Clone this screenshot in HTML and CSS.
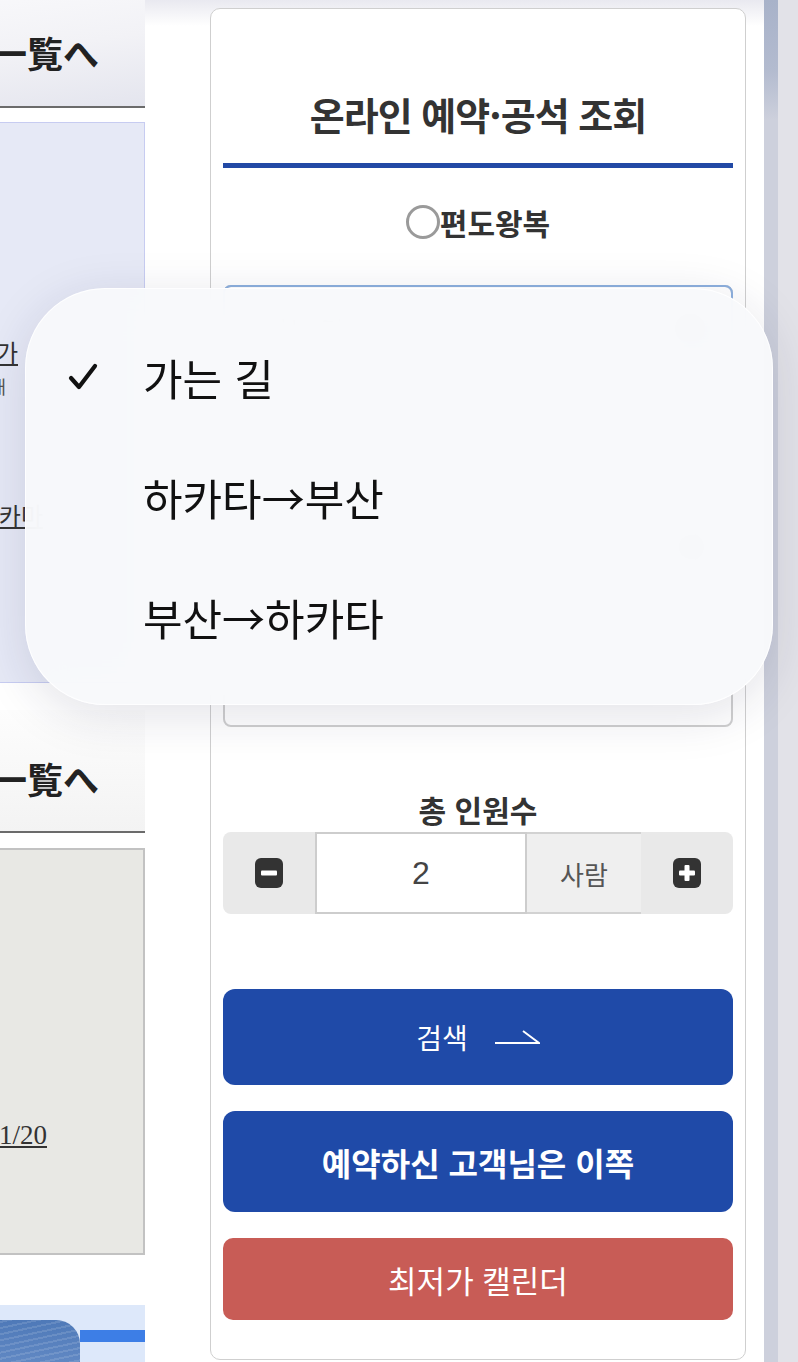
FILE: index.html
```html
<!DOCTYPE html>
<html lang="ko">

<head>
    <meta charset="UTF-8">
    <meta name="viewport" content="width=device-width, initial-scale=1.0">
    <title>온라인 예약·공석 조회</title>
    <link rel="stylesheet" href="styles.css">
</head>

<body>
    <div class="page">
        <div class="side">
            <div class="side-head"><span>運航一覧へ</span></div>
            <div class="notice">
                <p class="notice-line first"><u>예약 변경·취소 가</u></p>
                <p class="notice-line small">운항 상황 안내</p>
                <p class="notice-line last"><u>하카타 카마</u></p>
            </div>
            <div class="side-head second"><span>お知らせ一覧へ</span></div>
            <div class="news">
                <p class="news-line"><u>2024/11/20</u></p>
            </div>
            <div class="banner">
                <div class="banner-photo"></div>
                <div class="banner-bar"></div>
            </div>
        </div>

        <div class="panel">
            <h2 class="panel-title">온라인 예약·공석 조회</h2>
            <label class="trip"><span class="radio"></span>편도왕복</label>

            <div class="route">
                <div class="select is-open">
                    <span class="select-text">가는 길</span>
                    <span class="select-arrow"></span>
                </div>
                <p class="route-label">승선일 선택</p>
                <div class="select">
                    <span class="select-text">날짜 선택</span>
                    <span class="select-arrow"></span>
                </div>
            </div>

            <p class="count-label">총 인원수</p>
            <div class="counter">
                <button class="step" type="button">
                    <svg width="28" height="30" viewBox="0 0 28 30">
                        <rect width="28" height="30" rx="6" fill="#333"/>
                        <rect x="6" y="12.5" width="16" height="5" rx="1" fill="#fff"/>
                    </svg>
                </button>
                <div class="count-value">2</div>
                <div class="count-unit">사람</div>
                <button class="step" type="button">
                    <svg width="28" height="30" viewBox="0 0 28 30">
                        <rect width="28" height="30" rx="6" fill="#333"/>
                        <rect x="6" y="12.5" width="16" height="5" rx="1" fill="#fff"/>
                        <rect x="11.5" y="7" width="5" height="16" rx="1" fill="#fff"/>
                    </svg>
                </button>
            </div>

            <button class="btn btn-search" type="button">검색
                <svg width="46" height="16" viewBox="0 0 46 16">
                    <path d="M1 14 H45 L29 2" fill="none" stroke="#fff" stroke-width="2"/>
                </svg>
            </button>
            <button class="btn btn-mine" type="button">예약하신 고객님은 이쪽</button>
            <button class="btn btn-calendar" type="button">최저가 캘린더</button>
        </div>

        <div class="edge"></div>
    </div>

    <!-- 열린 선택 메뉴 -->
    <ul class="menu">
        <li class="menu-item">
            <span class="menu-check">
                <svg width="30" height="28" viewBox="0 0 30 28">
                    <path d="M3 15 L11 24 L27 3" fill="none" stroke="#111" stroke-width="4.2" stroke-linecap="round" stroke-linejoin="round"/>
                </svg>
            </span>가는 길
        </li>
        <li class="menu-item"><span class="menu-check"></span>하카타→부산</li>
        <li class="menu-item"><span class="menu-check"></span>부산→하카타</li>
    </ul>
</body>

</html>
```

FILE: styles.css
```css
* {
    box-sizing: border-box;
}

body {
    margin: 0;
    height: 1362px;
    overflow: hidden;
    font-family: "Noto Sans CJK KR", "Noto Sans", sans-serif;
    color: #333;
    background: linear-gradient(#e9e9f0, #fff 26px);
}

p {
    margin: 0;
}

.page {
    display: flex;
    align-items: flex-start;
}

/* left column (cut off by the screen) */
.side {
    flex-shrink: 0;
    width: 400px;
    margin-left: -255px;
}

.side-head {
    height: 108px;
    padding: 27px 46px 0 0;
    border-bottom: 2px solid #6b6b6b;
    background: linear-gradient(172deg, #fbfbfd 0%, #f2f2f6 55%, #e4e5ee 100%);
    text-align: right;
    font-family: "Noto Sans CJK JP", sans-serif;
    font-size: 36px;
    font-weight: 700;
    line-height: 50px;
    color: #222;
    white-space: nowrap;
}

.side-head.second {
    margin-top: 27px;
    height: 123px;
    padding-top: 43px;
    background: linear-gradient(#fdfdfd, #f3f3f3);
}

.notice {
    margin-top: 14px;
    height: 561px;
    padding-top: 212px;
    background: #e6e9f6;
    border: 1px solid #c7ccf1;
    text-align: right;
    font-size: 24px;
    line-height: 34px;
    white-space: nowrap;
}

.notice-line.first {
    padding-right: 126px;
}

.notice-line.small {
    padding-right: 138px;
    font-size: 18px;
    color: #555;
}

.notice-line.last {
    margin-top: 95px;
    padding-right: 101px;
}

.news {
    margin-top: 15px;
    height: 407px;
    padding: 268px 96px 0 0;
    background: #e8e8e4;
    border: 2px solid #c2c2c2;
    text-align: right;
    font-family: "Liberation Serif", serif;
    font-size: 27px;
    line-height: 34px;
}

.banner {
    display: flex;
    align-items: flex-start;
    margin-top: 50px;
    height: 60px;
    background: #dde8fa;
}

.banner-photo {
    width: 335px;
    height: 45px;
    margin-top: 15px;
    border-top-right-radius: 24px;
    background:
        repeating-linear-gradient(168deg, rgba(255, 255, 255, 0.12) 0 2px, transparent 2px 6px),
        linear-gradient(#4e79b8, #6289c4);
}

.banner-bar {
    flex: 1;
    height: 12px;
    margin-top: 25px;
    background: #3d7ee6;
}

/* reservation panel */
.panel {
    flex-shrink: 0;
    display: flex;
    flex-direction: column;
    width: 536px;
    height: 1352px;
    margin: 8px 0 0 65px;
    padding: 0 12px;
    background: #fff;
    border: 1px solid #cfcfcf;
    border-radius: 10px;
}

.panel-title {
    margin: 0;
    padding: 80px 0 24px;
    border-bottom: 5px solid #2249a5;
    text-align: center;
    font-size: 38px;
    font-weight: 700;
    line-height: 50px;
    letter-spacing: -1px;
    color: #333;
}

.trip {
    display: flex;
    align-items: center;
    justify-content: center;
    margin-top: 34px;
    height: 40px;
    font-size: 30px;
    font-weight: 700;
    color: #333;
}

.radio {
    width: 34px;
    height: 34px;
    border: 3px solid #9a9a9a;
    border-radius: 50%;
    background: #fff;
}

.route {
    margin-top: 43px;
    height: 442px;
    border: 2px solid #cfcfcf;
    border-radius: 8px;
}

.select {
    display: flex;
    align-items: center;
    justify-content: space-between;
    height: 88px;
    margin: 0 -2px;
    padding: 0 26px 0 40px;
    border: 2px solid #d6d6d6;
    border-radius: 8px;
    font-size: 26px;
    color: #777;
}

.select.is-open {
    margin-top: -2px;
    border-color: #8db0de;
}

.select-arrow {
    width: 30px;
    height: 30px;
    border-radius: 50%;
    background: #999;
}

.route-label {
    margin: 50px 0 0 30px;
    height: 40px;
    font-size: 26px;
    color: #888;
}

.route .select:last-child {
    margin-top: 40px;
}

.count-label {
    margin-top: 64px;
    text-align: center;
    font-size: 30px;
    font-weight: 700;
    line-height: 36px;
    color: #333;
}

.counter {
    display: flex;
    height: 82px;
    margin-top: 5px;
    background: #e9e9e9;
    border-radius: 8px;
}

.step {
    display: flex;
    align-items: center;
    justify-content: center;
    width: 92px;
    padding: 0;
    border: none;
    background: none;
}

.count-value {
    display: flex;
    align-items: center;
    justify-content: center;
    width: 212px;
    background: #fff;
    border: 2px solid #cdcdcd;
    font-family: "Liberation Sans", sans-serif;
    font-size: 32px;
    color: #444;
}

.count-unit {
    display: flex;
    align-items: center;
    justify-content: center;
    width: 114px;
    background: #efefef;
    border-top: 2px solid #d2d2d2;
    border-bottom: 2px solid #d2d2d2;
    font-size: 26px;
    color: #555;
}

.btn {
    display: flex;
    align-items: center;
    justify-content: center;
    width: 100%;
    border: none;
    border-radius: 12px;
    font-family: inherit;
    color: #fff;
}

.btn-search {
    margin-top: 75px;
    height: 96px;
    background: #1f4aa8;
    font-size: 28px;
}

.btn-search svg {
    margin-left: 26px;
}

.btn-mine {
    margin-top: 26px;
    height: 101px;
    background: #1f4aa8;
    font-size: 32px;
    font-weight: 700;
}

.btn-calendar {
    margin-top: 26px;
    height: 82px;
    border-radius: 10px;
    background: #c85c56;
    font-size: 31px;
}

/* right edge of the screen */
.edge {
    flex-shrink: 0;
    width: 34px;
    height: 1362px;
    margin-left: 18px;
    background:
        linear-gradient(#a8b2c9 0, #b3bbcf 70px, rgba(200, 203, 216, 0) 120px) 0 0 / 14px 100% no-repeat,
        linear-gradient(90deg, #cdd0dc 0 14px, #e2e2e8 14px);
}

/* opened select menu */
.menu {
    position: absolute;
    top: 288px;
    left: 25px;
    width: 748px;
    height: 417px;
    margin: 0;
    padding: 28px 0 0 42px;
    list-style: none;
    border: 1.5px solid rgba(255, 255, 255, 0.95);
    border-radius: 80px;
    background: rgba(248, 249, 251, 0.95);
    box-shadow: 0 10px 50px rgba(30, 30, 70, 0.13);
    backdrop-filter: blur(24px);
}

.menu-item {
    display: flex;
    align-items: center;
    height: 120px;
    font-size: 43px;
    color: #111;
}

.menu-check {
    display: flex;
    align-items: center;
    width: 75px;
}
```
